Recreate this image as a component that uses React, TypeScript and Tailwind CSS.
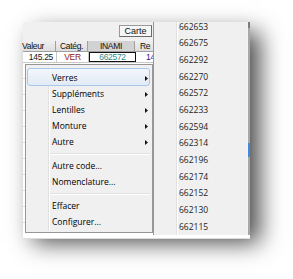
import React from "react";

const Arrow = () => (
  <svg width="3" height="5" viewBox="0 0 3 5" className="block">
    <path d="M0 0 L3 2.5 L0 5 Z" fill="#111" />
  </svg>
);

const mainItems: (string | null)[] = [
  "Verres",
  "Suppléments",
  "Lentilles",
  "Monture",
  "Autre",
  null,
  "Autre code...",
  "Nomenclature...",
  null,
  "Effacer",
  "Configurer...",
];
const withArrow = new Set(["Verres", "Suppléments", "Lentilles", "Monture", "Autre"]);

const codes = [
  "662653",
  "662675",
  "662292",
  "662270",
  "662572",
  "662233",
  "662594",
  "662314",
  "662196",
  "662174",
  "662152",
  "662130",
  "662115",
];

export default function App() {
  const sans = { fontFamily: '"Liberation Sans", Arial, sans-serif' };
  const ui = { fontFamily: '"Open Sans", "Noto Sans", sans-serif' };
  return (
    <div className="w-[293px] h-[279px] bg-white overflow-hidden pt-[22px] pl-[23px]">
      <div
        className="relative w-[227px] h-[211px] bg-white shadow-[10px_10px_22px_rgba(0,0,0,0.7)]"
        style={sans}
      >
        {/* toolbar */}
        <div className="h-[19px] bg-[#f0f0f0] flex items-start pt-[3px] pl-[96px]">
          <div className="w-[33px] h-[12px] border border-[#9a9a9a] border-r-[#6a6a6a] border-b-[#6a6a6a] bg-[#f6f6f6] flex items-center justify-center text-[9px] leading-none text-[#111]">
            Carte
          </div>
        </div>
        {/* header */}
        <div className="flex h-[11px] border-b border-[#a0a0a0] text-[8.5px] leading-none text-[#111] tracking-[-0.3px]">
          <div className="w-[34px] bg-gradient-to-b from-[#efefef] to-[#dedede] border-r border-[#a0a0a0] flex items-center -ml-[1px]">
            Valeur
          </div>
          <div className="w-[32px] bg-gradient-to-b from-[#efefef] to-[#dedede] border-r border-[#a0a0a0] flex items-center justify-center">
            Catég.
          </div>
          <div className="w-[47px] bg-[#d2d2d2] border-r border-[#a0a0a0] flex items-center justify-center">
            INAMI
          </div>
          <div className="flex-1 bg-gradient-to-b from-[#efefef] to-[#dedede] flex items-center pl-[5px]">
            Re
          </div>
        </div>
        {/* data row */}
        <div className="flex h-[11px] border-b border-[#c8c8c8] bg-white text-[8.5px] leading-none tracking-[-0.3px]">
          <div className="w-[34px] border-r border-[#c8c8c8] flex items-center justify-end pr-[3px] text-[#111]">
            145.25
          </div>
          <div className="w-[32px] border-r border-[#c8c8c8] flex items-center justify-center text-[#8b1c1c]">
            VER
          </div>
          <div className="w-[47px] border-[1.5px] border-[#111] flex items-center justify-center text-[#2f8a8a]">
            662572
          </div>
          <div className="flex-1 flex items-center pl-[10px] text-[#1a1a9a]">145</div>
        </div>
        {/* body rows */}
        {Array.from({ length: 11 }).map((_, i) => (
          <div key={i} className="h-[16px] border-b border-[#dcdcdc] bg-white" />
        ))}

        {/* main context menu */}
        <div
          className="absolute left-[2px] top-[42px] w-[128px] bottom-0 border border-[#979797] bg-[#f0f0f0] pt-[5px] pb-[2px] text-[8.5px] leading-none text-black"
          style={ui}
        >
          <div className="absolute left-[22px] top-[1px] bottom-[1px] w-[2px] flex">
            <div className="w-[1px] bg-[#e0e0e0]" />
            <div className="w-[1px] bg-white" />
          </div>
          {mainItems.map((it, i) =>
            it === null ? (
              <div key={i} className="relative h-[8px] flex flex-col justify-center ml-[24px] mr-[2px]">
                <div className="h-[1px] bg-[#e0e0e0]" />
                <div className="h-[1px] bg-white" />
              </div>
            ) : (
              <div key={i} className="relative h-[16px]">
                {it === "Verres" && (
                  <div className="absolute left-[1px] right-[2px] -top-[2px] bottom-0 rounded-[3px] border border-[#a9c7ea] bg-gradient-to-b from-[#f3f7fc] to-[#e1eaf5]" />
                )}
                <div className="relative h-full flex items-center pl-[26px] pr-[4px]">
                  <span className="flex-1">{it}</span>
                  {withArrow.has(it) && <Arrow />}
                </div>
              </div>
            )
          )}
        </div>

        {/* submenu */}
        <div
          className="absolute left-[130px] top-0 w-[97px] h-[213px] border-l border-[#979797] bg-[#f0f0f0] overflow-hidden text-[8.5px] leading-none text-[#222]"
          style={ui}
        >
          <div className="absolute left-[22px] top-0 bottom-0 w-[2px] flex">
            <div className="w-[1px] bg-[#e0e0e0]" />
            <div className="w-[1px] bg-white" />
          </div>
          <div className="absolute right-0 top-0 bottom-0 w-[3px] flex">
            <div className="w-[1px] bg-[#f6f4ea]" />
            <div className="w-[2px] bg-[#a8a8a8]" />
            <div className="absolute right-0 top-0 w-[2px] h-[6px] bg-[#7c7c7c]" />
            <div className="absolute right-0 top-[121px] w-[2.5px] h-[14px] bg-[#3f8ae0]" />
          </div>
          <div className="-mt-[3.33px]">
            {codes.map((c) => (
              <div key={c} className="h-[16.67px] flex items-center pl-[25px]">
                {c}
              </div>
            ))}
          </div>
        </div>
      </div>
    </div>
  );
}
